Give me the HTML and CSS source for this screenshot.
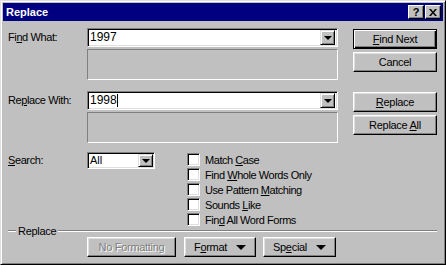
FILE: index.html
```
<!DOCTYPE html>
<html>
<head>
    <title>Replace</title>
    <link rel="stylesheet" href="styles.css">
</head>
<body>
    <div class="window">
        <div class="titlebar">
            <span class="title">Replace</span>
            <div class="title-buttons">
                <span class="tbtn help">?</span>
                <span class="tbtn close">
                    <svg width="8" height="7" viewBox="0 0 8 7"><path d="M0 0h2l2 2.5L6 0h2L5 3.5 8 7H6L4 4.5 2 7H0l3-3.5z" fill="#000"/></svg>
                </span>
            </div>
        </div>

        <div class="content">
            <div class="section">
                <div class="lbl">Fi<u>n</u>d What:</div>
                <div class="combo">
                    <span class="combo-text">1997</span>
                    <span class="drop"><i class="arrow"></i></span>
                </div>
                <div class="format-box"></div>
                <div class="buttons">
                    <button class="btn default"><span><u>F</u>ind Next</span></button>
                    <button class="btn"><span>Cancel</span></button>
                </div>
            </div>

            <div class="section second">
                <div class="lbl">Re<u>p</u>lace With:</div>
                <div class="combo">
                    <span class="combo-text">1998<span class="caret"></span></span>
                    <span class="drop"><i class="arrow"></i></span>
                </div>
                <div class="format-box"></div>
                <div class="buttons">
                    <button class="btn"><span><u>R</u>eplace</span></button>
                    <button class="btn"><span>Replace <u>A</u>ll</span></button>
                </div>
            </div>

            <div class="search-row">
                <div class="lbl search-lbl"><u>S</u>earch:</div>
                <div class="combo small">
                    <span class="combo-text">All</span>
                    <span class="drop"><i class="arrow"></i></span>
                </div>
                <div class="options">
                    <div class="opt"><span class="check"></span><span>Match <u>C</u>ase</span></div>
                    <div class="opt"><span class="check"></span><span>Find <u>W</u>hole Words Only</span></div>
                    <div class="opt"><span class="check"></span><span>Use Pattern <u>M</u>atching</span></div>
                    <div class="opt"><span class="check"></span><span>Sounds <u>L</u>ike</span></div>
                    <div class="opt"><span class="check"></span><span>Fin<u>d</u> All Word Forms</span></div>
                </div>
            </div>

            <div class="group">
                <span class="line short"></span>
                <span class="group-lbl">Replace</span>
                <span class="line"></span>
            </div>

            <div class="bottom-row">
                <button class="btn disabled wide"><span>No Formatting</span></button>
                <button class="btn fmt"><span>F<u>o</u>rmat</span><i class="tri"></i></button>
                <button class="btn spc"><span>Sp<u>e</u>cial</span><i class="tri"></i></button>
            </div>
        </div>
    </div>
</body>
</html>
```

FILE: styles.css
```
body {
    margin: 0;
    background: #c0c0c0;
    font-family: 'Liberation Sans', Arial, sans-serif;
    font-size: 11px;
    color: #000;
}
u {
    text-decoration: underline;
    text-underline-offset: 1px;
}
.window {
    width: 446px;
    height: 265px;
    box-sizing: border-box;
    background: #c0c0c0;
    border: 1px solid;
    border-color: #dfdfdf #000 #000 #dfdfdf;
    box-shadow: inset 1px 1px #fff, inset -1px -1px #808080;
    padding: 2px;
}
.titlebar {
    height: 18px;
    background: #000080;
    display: flex;
    align-items: center;
    justify-content: space-between;
    padding: 0 2px 0 3px;
}
.title {
    color: #fff;
    font-weight: bold;
}
.title-buttons {
    display: flex;
    gap: 1px;
}
.tbtn {
    width: 16px;
    height: 14px;
    box-sizing: border-box;
    background: #c0c0c0;
    border: 1px solid;
    border-color: #fff #000 #000 #fff;
    box-shadow: inset -1px -1px #808080;
    display: flex;
    align-items: center;
    justify-content: center;
    font-weight: bold;
    font-size: 11px;
    line-height: 1;
}
.content {
    padding: 7px 6px 0 5px;
}
.section {
    display: grid;
    grid-template-columns: 64px 251px 84px;
    grid-template-rows: 19px 31px;
    column-gap: 15px;
    row-gap: 2px;
}
.section.second {
    margin-top: 11px;
}
.lbl {
    line-height: 19px;
    letter-spacing: -0.4px;
    white-space: nowrap;
}
.combo {
    grid-column: 2;
    grid-row: 1;
    box-sizing: border-box;
    background: #fff;
    border: 1px solid;
    border-color: #808080 #fff #fff #808080;
    box-shadow: inset 1px 1px #000, inset -1px -1px #dfdfdf;
    display: flex;
    align-items: center;
    padding: 2px;
}
.combo-text {
    flex: 1;
    font-size: 12px;
    line-height: 15px;
    display: flex;
    align-items: center;
}
.caret {
    display: inline-block;
    width: 1px;
    height: 13px;
    background: #000;
}
.drop {
    width: 15px;
    height: 15px;
    box-sizing: border-box;
    background: #c0c0c0;
    border: 1px solid;
    border-color: #dfdfdf #000 #000 #dfdfdf;
    box-shadow: inset 1px 1px #fff, inset -1px -1px #808080;
    display: flex;
    align-items: center;
    justify-content: center;
}
.arrow, .tri {
    display: inline-block;
    width: 0;
    height: 0;
    border-left: 4px solid transparent;
    border-right: 4px solid transparent;
    border-top: 4px solid #000;
}
.tri {
    border-left-width: 5px;
    border-right-width: 5px;
    border-top-width: 5px;
}
.format-box {
    grid-column: 2;
    grid-row: 2;
    box-sizing: border-box;
    border: 1px solid;
    border-color: #808080 #fff #fff #808080;
}
.buttons {
    grid-column: 3;
    grid-row: 1 / span 2;
    display: flex;
    flex-direction: column;
    gap: 3px;
    padding-top: 1px;
}
.btn {
    height: 20px;
    box-sizing: border-box;
    background: #c0c0c0;
    border: 1px solid;
    border-color: #fff #000 #000 #fff;
    box-shadow: inset -1px -1px #808080, inset 1px 1px #dfdfdf;
    font-family: inherit;
    font-size: 11px;
    letter-spacing: -0.3px;
    color: #000;
    padding: 0;
    display: flex;
    align-items: center;
    justify-content: center;
    gap: 9px;
    white-space: nowrap;
}
.btn.default {
    border: 1px solid #000;
    box-shadow: inset 1px 1px #fff, inset -1px -1px #000, inset -2px -2px #808080;
}
.btn.disabled {
    color: #808080;
    text-shadow: 1px 1px #fff;
}
.search-row {
    display: flex;
    margin-top: 9px;
}
.search-lbl {
    width: 64px;
    margin-right: 15px;
    line-height: 17px;
}
.combo.small {
    width: 68px;
    height: 17px;
    padding: 2px 1px 2px 2px;
}
.combo.small .combo-text {
    font-size: 11px;
}
.combo.small .drop {
    height: 13px;
}
.options {
    margin-left: 32px;
    display: flex;
    flex-direction: column;
}
.opt {
    height: 15px;
    display: flex;
    align-items: center;
    letter-spacing: -0.45px;
    white-space: nowrap;
}
.check {
    width: 13px;
    height: 13px;
    box-sizing: border-box;
    background: #fff;
    border: 1px solid;
    border-color: #808080 #fff #fff #808080;
    box-shadow: inset 1px 1px #000, inset -1px -1px #dfdfdf;
    margin-right: 5px;
    flex: none;
}
.group {
    display: flex;
    align-items: center;
    height: 12px;
    margin-top: -2px;
}
.line {
    flex: 1;
    border-top: 1px solid #808080;
    border-bottom: 1px solid #fff;
}
.line.short {
    flex: none;
    width: 8px;
}
.group-lbl {
    padding: 0 2px;
    letter-spacing: -0.3px;
}
.bottom-row {
    display: flex;
    gap: 8px;
    margin-left: 79px;
}
.bottom-row .wide {
    width: 89px;
}
.bottom-row .fmt {
    width: 72px;
    margin-right: -1px;
}
.bottom-row .spc {
    width: 73px;
}
```
